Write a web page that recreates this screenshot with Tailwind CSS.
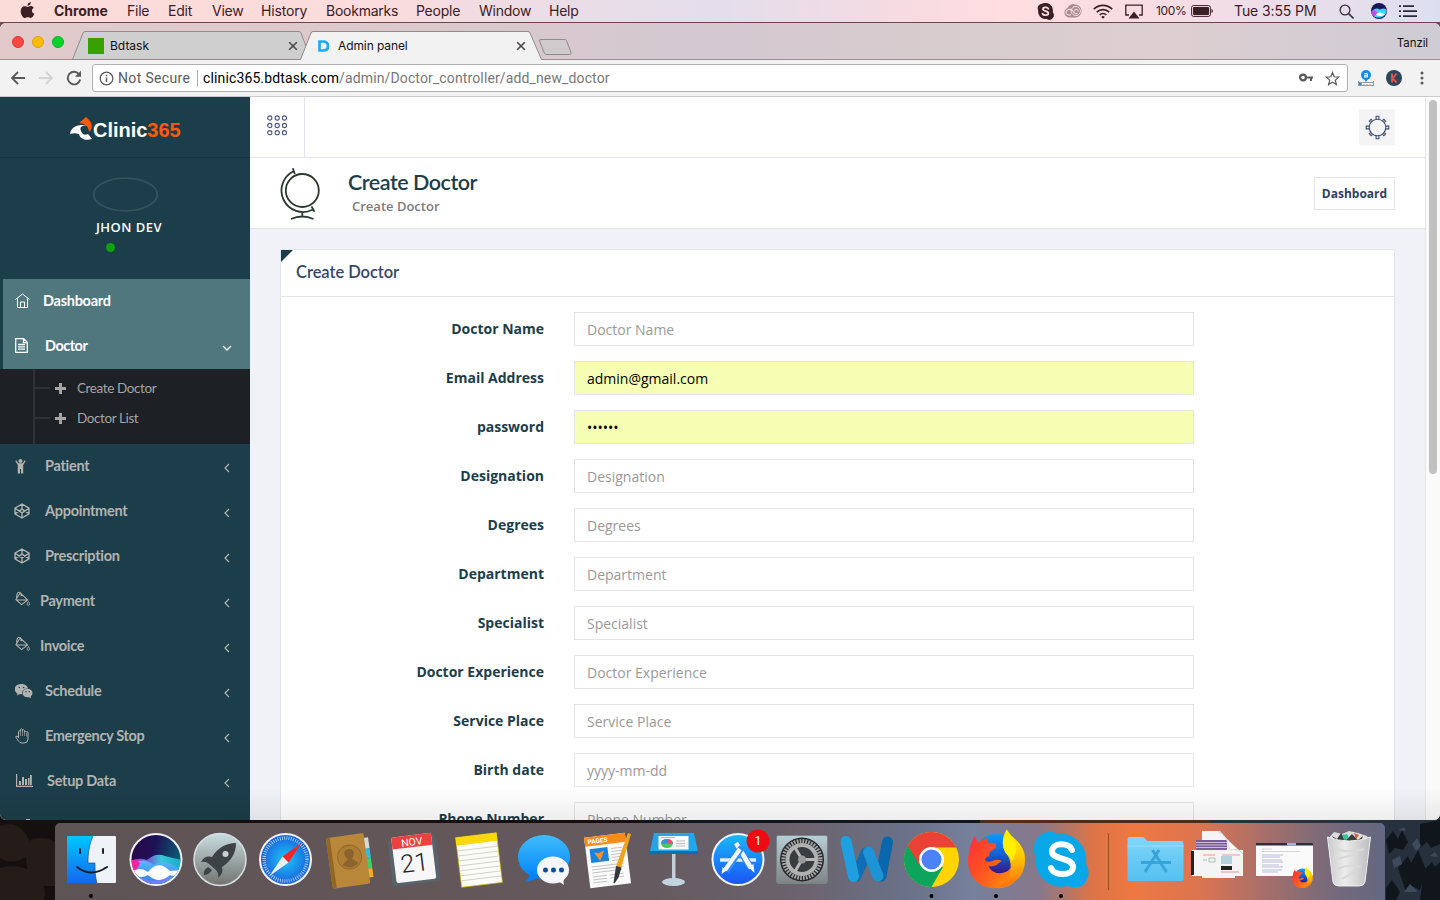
<!DOCTYPE html>
<html lang="en">
<head>
<meta charset="utf-8">
<title>Admin panel</title>
<script src="https://cdn.jsdelivr.net/npm/@tailwindcss/browser@4"></script>
</head>
<body class="w-[1440px] h-[900px] overflow-hidden relative bg-[#15110f] font-['Open_Sans',sans-serif]">

<!-- shared symbols -->
<svg class="absolute w-0 h-0" aria-hidden="true">
  <defs>
    <symbol id="left" viewBox="0 0 8 10"><path d="M6 1 2 5l4 4" fill="none" stroke="currentColor" stroke-width="1.2"/></symbol>
    <symbol id="x" viewBox="0 0 10 10"><path d="M1.2 1.2l7.6 7.6M8.8 1.2 1.2 8.8" stroke="#4c4648" stroke-width="1.6" fill="none"/></symbol>
    <symbol id="codepen" viewBox="0 0 16 16"><path d="M8 1 15 5.2v5.6L8 15 1 10.800V5.200zM1 5.200l7 4.700 7-4.700M1 10.800 8 6.100l7 4.700M8 1v5.100M8 9.900V15" fill="none" stroke="currentColor" stroke-width="1.35" stroke-linejoin="round"/></symbol>
    <symbol id="bucket" viewBox="0 0 16 16"><path d="M5.500 1.600 13.500 9 7 14 1 8.700zM1 9h12.500M1.800 7.500C1.500 3.500 2.500.8 4.500.8s2.200 2 2 4.200" fill="none" stroke="currentColor" stroke-width="1.100"/><path d="M14.300 10.800c-2.200 3.200-1 4 0 4s2.200-.8 0-4z" fill="none" stroke="currentColor" stroke-width="1"/></symbol>
    <symbol id="plus" viewBox="0 0 11 11"><path d="M4 0h3v4h4v3H7v4H4V7H0V4h4z" fill="currentColor"/></symbol>
    <symbol id="ff" viewBox="0 0 56 58">
      <circle cx="28" cy="24" r="20" fill="url(#ffblue)"/>
      <path d="M7 6q0 4 3 7 4-4 10-5-2 3 0 5l7 1q2 4-2 6-5 2-4 6-5 1-4 5 5 2 9-1 4-1 7 1-3 2-5 4-5 2-8 1 3 7 11 7 11 0 13-10l1-8 10-4q3 14-4 24-8 13-23 13Q12 58 4 46-2 36 1 22 3 12 7 6z" fill="url(#ffred)"/>
      <path d="M38 0q3 5 9 10 9 8 9 20 0 14-10 21-8 6-18 6 14-5 14-20 0-9-5-14-6-10 1-23z" fill="url(#fftail)"/>
      <path d="M38 0q2 5 6 9 5 6 3 14l-4 9q-1-5-6-9-6-10 1-23z" fill="#fff000"/>
    </symbol>
    <linearGradient id="ffred" x1="0" y1="0" x2="1" y2=".6"><stop offset="0" stop-color="#ff2f50"/><stop offset=".2" stop-color="#ff3d2e"/><stop offset=".55" stop-color="#ff5a1f"/><stop offset="1" stop-color="#ff9a00"/></linearGradient>
    <linearGradient id="fftail" x1="0" y1="0" x2="0" y2="1"><stop offset="0" stop-color="#fff200"/><stop offset=".5" stop-color="#ffc400"/><stop offset="1" stop-color="#ff6a10"/></linearGradient>
    <linearGradient id="ffblue" x1="0" y1="0" x2="0" y2="1"><stop offset="0" stop-color="#0a9cff"/><stop offset=".5" stop-color="#1460d8"/><stop offset="1" stop-color="#3a1080"/></linearGradient>
    <linearGradient id="finL" x1="0" y1="0" x2="0" y2="1"><stop offset="0" stop-color="#00c8ff"/><stop offset="1" stop-color="#1666f0"/></linearGradient>
    <linearGradient id="siri" x1="0" y1="0" x2="1" y2=".3"><stop offset="0" stop-color="#2a0648"/><stop offset=".5" stop-color="#1d1256"/><stop offset="1" stop-color="#0a5a72"/></linearGradient>
    <linearGradient id="siriW" x1="0" y1="0" x2="1" y2="0"><stop offset="0" stop-color="#f01fb0"/><stop offset=".35" stop-color="#7a58d8"/><stop offset=".6" stop-color="#38c8d8"/><stop offset="1" stop-color="#16a9c8"/></linearGradient>
    <linearGradient id="siriB" x1="0" y1="0" x2="0" y2="1"><stop offset="0" stop-color="#58b8ff"/><stop offset="1" stop-color="#2878e8"/></linearGradient>
    <clipPath id="siriC"><circle cx="32" cy="36.500" r="24.500"/></clipPath>
    <linearGradient id="rocket" x1="0" y1="0" x2="0" y2="1"><stop offset="0" stop-color="#c9dde2"/><stop offset="1" stop-color="#71726f"/></linearGradient>
    <radialGradient id="safari"><stop offset="0" stop-color="#1cc8fa"/><stop offset="1" stop-color="#1a62dc"/></radialGradient>
    <linearGradient id="blueV" x1="0" y1="0" x2="0" y2="1"><stop offset="0" stop-color="#19b8fd"/><stop offset="1" stop-color="#1a55f5"/></linearGradient>
    <linearGradient id="msg" x1="0" y1="0" x2="0" y2="1"><stop offset="0" stop-color="#41bdfb"/><stop offset="1" stop-color="#0082fa"/></linearGradient>
    <linearGradient id="metal" x1="0" y1="0" x2="0" y2="1"><stop offset="0" stop-color="#b9ced6"/><stop offset="1" stop-color="#7f8486"/></linearGradient>
    <linearGradient id="folder" x1="0" y1="0" x2="0" y2="1"><stop offset="0" stop-color="#7fd6fa"/><stop offset="1" stop-color="#55bff0"/></linearGradient>
    <linearGradient id="trash" x1="0" y1="0" x2="1" y2="0"><stop offset="0" stop-color="#c9c9c9"/><stop offset=".4" stop-color="#ececec"/><stop offset="1" stop-color="#bdbdbd"/></linearGradient>
  </defs>
</svg>

<!-- desktop wallpaper strip -->
<svg class="absolute left-0 top-[800px]" width="1440" height="100">
  <rect width="1440" height="100" fill="#15100f"/>
  <path d="M0 26q14-6 24 6t4 24Q12 66 0 58zM30 40q18-6 30 6v40H36q-16-20-6-46zM0 68q20-6 34 6t10 26H0z" fill="#251b18"/>
  <rect x="640" y="18" width="340" height="8" fill="#10161c"/><rect x="980" y="18" width="230" height="8" fill="#4f2b18"/>
  <rect x="1210" y="18" width="230" height="82" fill="#27303d"/>
  <path d="M1386 40l7-9 5 8 4-9 6 12-5 8-8-2-6 6zM1398 68l10-12 3 7 7-13 8 20-6 20-8-4-6 6zM1420 24l20-4v24l-9 4-4-6-7 6zM1424 70l8-8 3 5 5-5v38h-20zM1386 88l6-8 8 12-4 8h-10z" fill="#11151c"/>
  <path d="M1392 60l8-4 2 8-8 4zM1412 44l5-6 4 8-5 5zM1404 92l6-8 8 8zM1430 56l5-4 3 5zM1398 30l6-3 2 4z" fill="#3c4a5c"/>
</svg>

<!-- macOS menu bar -->
<header class="h-[22px] flex items-center justify-between text-[14px] leading-[22px] tracking-[-0.25px] text-[#3b2026] font-['Inter',sans-serif] bg-[linear-gradient(90deg,#fbdcd9_0%,#fcdcdc_25%,#ecdde6_38%,#e3deec_50%,#f5dbe2_62%,#ffdde0_70%,#f3dde6_84%,#dddff0_100%)]">
  <div class="flex items-center pl-[20px] whitespace-nowrap">
    <svg class="w-[34px] h-[17px] pr-[19px] mb-px" viewBox="0 0 14 17" fill="#3b2026"><path d="M10.300 0c.2 2-1.500 3.800-3.300 3.800C6.800 2 8.400.2 10.300 0zM7.200 4.900c.8 0 1.600-.8 3-.8 1.300 0 2.400.7 3 1.600-2.600 1.600-2.200 5 .6 6.100-.7 1.900-2 4.200-3.500 4.200-1.200 0-1.500-.7-2.900-.7s-1.900.7-3 .7C2.500 16 .2 12.500.2 9.200c0-3.200 2-5 4-5 1.300 0 2.300.7 3 .7z"/></svg>
    <span class="w-[73px] font-bold tracking-[-0.05px]">Chrome</span><span class="w-[41px]">File</span><span class="w-[44px]">Edit</span><span class="w-[49px]">View</span><span class="w-[65px] tracking-[-0.15px]">History</span><span class="w-[90px] tracking-[-0.25px]">Bookmarks</span><span class="w-[63px]">People</span><span class="w-[70px]">Window</span><span>Help</span>
  </div>
  <div class="flex items-center pr-[23px] whitespace-nowrap">
    <svg class="mr-[9px]" width="17" height="17" viewBox="0 0 17 17"><path d="M5 .8a7.500 7.500 0 0 1 10.700 8.500A4.500 4.500 0 0 1 9.800 16 7.500 7.500 0 0 1 1.200 7.500 4.500 4.500 0 0 1 5 .8z" fill="#3b2026"/><path d="M11.300 5.700C10.500 3.900 5.800 3.900 5.900 6.300c.1 2.300 5.500 1.500 5.500 4 0 2.400-5.100 2.500-5.900.3" fill="none" stroke="#fbdde0" stroke-width="1.800" stroke-linecap="round"/></svg>
    <svg class="mr-[10px]" width="20" height="14" viewBox="0 0 20 14"><path d="M5.500 13.500a5 5 0 0 1-1-9.500A6.500 6.500 0 0 1 12.500.4a6.600 6.600 0 0 1 .5 13.100z" fill="#a58d90"/><circle cx="12.800" cy="7" r="4.600" fill="none" stroke="#fbdde0" stroke-width="1"/><path d="M14.500 9.200c-2.500 1.800-4-1.500-5.500-3C6.500 4.500 3 5.800 3 8.300s3 3.500 5 2.200M11 6.500c1.500-2 4.500-.8 4.300 1" fill="none" stroke="#fbdde0" stroke-width="1.100"/></svg>
    <svg class="mr-[12px]" width="20" height="15" viewBox="0 0 20 15" fill="none" stroke="#3b2026" stroke-width="1.700"><path d="M.8 5.200a13 13 0 0 1 18.400 0M3.800 8.200a8.800 8.800 0 0 1 12.400 0M6.700 11a4.800 4.800 0 0 1 6.600 0"/><path d="m10 14.800-1.800-1.900a2.600 2.600 0 0 1 3.600 0z" fill="#3b2026" stroke="none"/></svg>
    <svg class="mr-[13px]" width="18" height="15" viewBox="0 0 18 15"><path d="M4 11H.8V1.200h16.400V11H14" fill="none" stroke="#3b2026" stroke-width="1.300"/><path d="m9 7.500 5.500 7h-11z" fill="#3b2026"/></svg>
    <span class="w-[35px] text-[12px] tracking-[-0.3px]">100%</span>
    <svg class="mr-[21px]" width="22" height="12" viewBox="0 0 22 12"><rect x=".6" y=".6" width="18.800" height="10.800" rx="2" fill="none" stroke="#3b2026" stroke-width="1"/><rect x="2" y="2" width="16" height="8" rx="1" fill="#3b2026"/><path d="M20.500 4c1.800.6 1.800 3.400 0 4z" fill="#3b2026"/></svg>
    <span class="w-[105px] tracking-[-0.1px]">Tue 3:55 PM</span>
    <svg class="mr-[17px]" width="15" height="15" viewBox="0 0 15 15" fill="none" stroke="#3a2b38"><circle cx="6" cy="6" r="4.900" stroke-width="1.300"/><path d="m9.500 9.500 5 5" stroke-width="1.600"/></svg>
    <svg class="mr-[12px]" width="16" height="16" viewBox="0 0 16 16"><circle cx="8" cy="8" r="8" fill="#1c1458"/><path d="M1 8q4-4 8-1.500 4-2 6.800.5a8 8 0 0 1-15 3.500z" fill="#3fd2f5"/><path d="M.2 8.500q3-3 6 1l-3 4.500Q.5 12 .2 8.500z" fill="#c04be8"/><path d="M5 11.500q4-4 9 0-5 3-9 0z" fill="#fff"/></svg>
    <svg width="18" height="13" viewBox="0 0 18 13" stroke="#2d2a38" stroke-width="1.800"><path d="M0 1.200h2M4 1.200h11M0 6.200h2M4 6.200h14M0 11.200h2M4 11.200h14"/></svg>
  </div>
</header>

<!-- Chrome window -->
<main class="h-[798px] border-t border-[#6e4650] bg-[#6b4a5a]">
<div class="h-full overflow-hidden rounded-[6px] flex flex-col bg-[#f2f2f2]">
  <div class="h-[37px] shrink-0 flex items-start bg-[linear-gradient(90deg,#e2cacb_0%,#dbc9cc_30%,#d3c8d0_48%,#d9cccf_65%,#dcced1_82%,#ceccd4_100%)] shadow-[inset_0_-1px_0_#9b8f92] font-['Inter',sans-serif] text-[12px] text-[#111]">
    <div class="flex gap-[8px] pl-[12px] pt-[13px] w-[72px]">
      <i class="size-[12px] shrink-0 rounded-full bg-[#fc4744] border border-[#e0352f]"></i><i class="size-[12px] shrink-0 rounded-full bg-[#fdbc05] border border-[#e0a203]"></i><i class="size-[12px] shrink-0 rounded-full bg-[#07d32b] border border-[#0ab022]"></i>
    </div>
    <div class="relative mt-[8px] w-[240px] h-[29px] flex items-center pl-[16px]">
      <svg class="absolute inset-0" width="240" height="29"><path d="M.5 28.500 11 2Q11.600.5 13 .5h214q1.500 0 2 1.500l10 26.500z" fill="#cfcfcf"/><path d="M.5 28.500 11 2Q11.600.5 13 .5h214q1.500 0 2 1.500l10 26.500H0" fill="none" stroke="#938a8c"/></svg>
      <i class="relative size-[16px] bg-[#38a000]"></i>
      <span class="relative pl-[6px] w-[184px] tracking-[0px]">Bdtask</span>
      <svg class="relative" width="10" height="10"><use href="#x"/></svg>
    </div>
    <div class="relative -ml-[12px] mt-[8px] w-[244px] h-[29px] flex items-center pl-[18px]">
      <svg class="absolute inset-0" width="244" height="29"><path d="M.5 29 11 2Q11.600.5 13 .5h215q1.500 0 2 1.500l12 27z" fill="#f2f2f2"/><path d="M.5 28.500 11 2Q11.600.5 13 .5h215q1.500 0 2 1.500l11.500 26.500H244" fill="none" stroke="#938a8c"/></svg>
      <svg class="relative" width="12" height="12" viewBox="0 0 12 12"><path d="M1.500 1.500H5q5 0 5 4.500t-5 4.500H1.500z" fill="none" stroke="#1fa9fb" stroke-width="2.700"/></svg>
      <span class="relative pl-[8px] w-[186px] tracking-[-0.1px]">Admin panel</span>
      <svg class="relative" width="10" height="10"><use href="#x"/></svg>
    </div>
    <svg class="-ml-[6px] mt-[15px]" width="35" height="18"><path d="M3 1.500h23q2 0 2.500 1l4.500 12q.5 2-1.500 2H9q-2 0-2.500-1L1.500 3Q1 1.500 3 1.500z" fill="#cfcbcc" stroke="#938a8c"/></svg>
    <span class="ml-auto pr-[12px] pt-[12px] text-[11.500px] leading-[17px] tracking-[-0.1px]">Tanzil</span>
  </div>

  <div class="h-[37px] shrink-0 flex items-center bg-[#f2f2f2] border-b border-[#c9c9c9] pl-[10px] pr-[10px]">
    <svg width="16" height="14" viewBox="0 0 16 14"><path d="M15 7H2M8 1 2 7l6 6" fill="none" stroke="#5a5a5a" stroke-width="1.800"/></svg>
    <svg class="ml-[12px]" width="16" height="14" viewBox="0 0 16 14"><path d="M1 7h13M8 1l6 6-6 6" fill="none" stroke="#d4d4d4" stroke-width="1.800"/></svg>
    <svg class="ml-[12px]" width="16" height="16" viewBox="0 0 16 16"><path d="M13.300 4.500A6.300 6.300 0 1 0 14.200 9.500" fill="none" stroke="#5a5a5a" stroke-width="1.900"/><path d="M15 .8v6H9z" fill="#5a5a5a"/></svg>
    <div class="ml-[10px] w-[1256px] h-[28px] flex items-center rounded-[3px] border border-[#b0b0b0] bg-white font-['Roboto',sans-serif] text-[14px] tracking-[0.13px] whitespace-nowrap">
      <svg class="ml-[6px]" width="15" height="15" viewBox="0 0 15 15"><circle cx="7.500" cy="7.500" r="6.300" fill="none" stroke="#5a5a5a" stroke-width="1.300"/><path d="M7.500 6.500V11M7.500 3.700v1.600" stroke="#5a5a5a" stroke-width="1.500"/></svg>
      <span class="ml-[4px] w-[78px] text-[#5a5a5a] tracking-[0.34px]">Not Secure</span><i class="w-px h-[16px] bg-[#aaa] ml-px mr-[5px]"></i>
      <span class="text-[#777]"><span class="text-black">clinic365.bdtask.com</span>/admin/Doctor_controller/add_new_doctor</span>
      <svg class="ml-auto" width="14" height="10" viewBox="0 0 14 10"><circle cx="4" cy="4.500" r="2.900" fill="none" stroke="#5a5a5a" stroke-width="2.200"/><path d="M7 3.500h7v2h-1V8h-2V5.500H7z" fill="#5a5a5a"/></svg>
      <svg class="ml-[12px] mr-[7px]" width="15" height="15" viewBox="0 0 15 15"><path d="m7.500 1.500 1.700 4.300 4.600.3-3.500 3 1.100 4.500-3.900-2.500-3.900 2.500 1.100-4.500-3.500-3 4.600-.3z" fill="none" stroke="#5a5a5a" stroke-width="1.200"/></svg>
    </div>
    <svg class="ml-[10px]" width="16" height="18" viewBox="0 0 16 18"><circle cx="8" cy="6" r="5" fill="#108df0"/><path d="m6 10 2 3 2-3z" fill="#108df0"/><path d="M6.500 4.500h2.700V8H6.700V6.300h2.500" fill="none" stroke="#fff" stroke-width="1.100"/><path d="M.5 12v5M15.500 12v5M.5 13.500h15M.5 16.500h15" stroke="#999" fill="none"/><path d="M3 16v-1M6 16v-1M9 16v-1M12 16v-1" stroke="#999"/><rect x="1" y="14" width="2.500" height="2" fill="#108df0"/></svg>
    <svg class="ml-[12px]" width="16" height="16" viewBox="0 0 16 16"><circle cx="8" cy="8" r="8" fill="#2c4558"/><path d="M6 3.500v9M10.700 3.500 6.500 8.500l4.200 4" stroke="#e65350" stroke-width="1.900" fill="none"/></svg>
    <svg class="ml-[18px]" width="4" height="14" fill="#5a5a5a"><circle cx="2" cy="2" r="1.500"/><circle cx="2" cy="7" r="1.500"/><circle cx="2" cy="12" r="1.500"/></svg>
  </div>

  <!-- page -->
  <div class="relative flex-1 min-h-0 flex bg-[#f1f2f7]">
    <aside class="w-[250px] shrink-0 bg-[#1c3e4a] text-[#b3b3b1] overflow-hidden">
      <div class="h-[61px] border-b border-[#17343f] flex items-center pl-[69px] pt-[4px]">
        <svg width="24" height="24" viewBox="0 0 24 24"><path d="M1 17C2 10 9 6 19 9c-5-1-9 0-7 5 1 3 4 5 7 3l4 5c-6 2-12 0-13-5-3-1-6-1-9 0z" fill="#fff"/><path d="M10 6l7-6c6 5 8 10 3 15 0-5-4-9-10-9z" fill="#ff5a0a"/></svg>
        <span class="font-['Liberation_Sans',sans-serif] font-bold text-[20px] leading-[24px] pt-px tracking-[-0.02px] text-white">Clinic<span class="text-[#ff5a0a]">365</span></span>
      </div>
      <div class="h-[121px] flex flex-col">
        <svg class="ml-[92px] mt-[19px]" width="67" height="35"><ellipse cx="33.500" cy="17.500" rx="31.800" ry="16.300" fill="none" stroke="#33525c" stroke-width="1.800"/></svg>
        <span class="ml-[96px] mt-[6px] leading-[18px] text-[13px] font-semibold text-white tracking-[0.45px]">JHON DEV</span>
        <i class="ml-[106px] mt-[7px] size-[9px] rounded-full bg-[#0aa30a]"></i>
      </div>
      <nav class="font-['Lato',sans-serif] font-bold text-[14.500px] leading-[20px] tracking-[-0.28px]">
        <a class="ml-[3px] h-[45px] flex items-center bg-[#50777e] text-white pl-[12px]"><svg class="w-[15px] h-[16px] mr-[13px] mb-[2px]" viewBox="0 0 15 16" fill="none" stroke="currentColor"><path d="M.5 6.500 7.500 1l7 5.500M2.500 5.500v9h10v-9M5.500 14.500V9h4v5.500"/></svg><span class="pb-[2px]">Dashboard</span></a>
        <a class="ml-[3px] h-[45px] flex items-center bg-[#50777e] text-white pl-[12px]"><svg class="w-[13px] h-[15px] mr-[17px] mb-[2px]" viewBox="0 0 13 15" fill="none" stroke="currentColor" stroke-width="1.300"><path d="M.7.7h8l3.600 3.600v10H.7zM8.500.7v4h3.800M3 6.500h7M3 8.800h7M3 11.200h7"/></svg><span class="pb-[2px] tracking-[-0.5px]">Doctor</span><svg class="ml-auto mr-[18px] mt-[2px]" width="10" height="8"><path d="M1 2l4 4 4-4" fill="none" stroke="currentColor" stroke-width="1.300"/></svg></a>
        <div class="h-[75px] bg-[#1d2025] pl-[33px] font-normal text-[13.500px] tracking-[-0.4px] text-[#a5a5a3]">
          <div class="h-full border-l-2 border-[#2d3335] pt-[4px]">
            <a class="h-[30px] flex items-center"><i class="w-[15px] h-[2px] bg-[#2d3335] mr-[5px]"></i><svg class="mr-[11px]" width="11" height="11"><use href="#plus"/></svg>Create Doctor</a>
            <a class="h-[30px] flex items-center"><i class="w-[15px] h-[2px] bg-[#2d3335] mr-[5px]"></i><svg class="mr-[11px]" width="11" height="11"><use href="#plus"/></svg>Doctor List</a>
          </div>
        </div>
        <a class="h-[45px] flex items-center pl-[15px]"><svg class="w-[11px] h-[15px] mr-[19px]" viewBox="0 0 11 15" fill="currentColor"><circle cx="5.500" cy="2" r="2"/><path d="M.3 2l1-.8L3.500 4.200h4L9.700 1.200l1 .8-2.500 4V14.500H6V10H5v4.500H2.800V6z"/></svg><span class="pb-[2px]">Patient</span><svg class="ml-auto mr-[19px] mt-[3px]" width="8" height="10"><use href="#left"/></svg></a>
        <a class="h-[45px] flex items-center pl-[14px]"><svg class="mr-[15px] mb-[2px]" width="16" height="16"><use href="#codepen"/></svg><span class="pb-[2px]">Appointment</span><svg class="ml-auto mr-[19px] mt-[3px]" width="8" height="10"><use href="#left"/></svg></a>
        <a class="h-[45px] flex items-center pl-[14px]"><svg class="mr-[15px] mb-[2px]" width="16" height="16"><use href="#codepen"/></svg><span class="pb-[2px]">Prescription</span><svg class="ml-auto mr-[19px] mt-[3px]" width="8" height="10"><use href="#left"/></svg></a>
        <a class="h-[45px] flex items-center pl-[15px]"><svg class="mr-[10px] mb-[6px]" width="15" height="16"><use href="#bucket"/></svg><span class="pb-[2px]">Payment</span><svg class="ml-auto mr-[19px] mt-[3px]" width="8" height="10"><use href="#left"/></svg></a>
        <a class="h-[45px] flex items-center pl-[15px]"><svg class="mr-[10px] mb-[6px]" width="15" height="16"><use href="#bucket"/></svg><span class="pb-[2px]">Invoice</span><svg class="ml-auto mr-[19px] mt-[3px]" width="8" height="10"><use href="#left"/></svg></a>
        <a class="h-[45px] flex items-center pl-[15px]"><svg class="w-[18px] h-[14px] mr-[12px] mb-[2px]" viewBox="0 0 18 14"><path d="M6.500 0C10 0 12.500 2 13 4.500 9 4.500 6.500 7 7 10.200l-3 0-2 1.500.4-2C-2.500 6-.5 0 6.500 0z" fill="currentColor"/><ellipse cx="12.500" cy="9" rx="5" ry="4.300" fill="currentColor"/><path d="m13 13 3 1-.5-2.500z" fill="currentColor"/><g fill="#1c3e4a"><circle cx="4.300" cy="3.500" r=".8"/><circle cx="8.600" cy="3.500" r=".8"/><circle cx="11" cy="7.800" r=".7"/><circle cx="14.200" cy="7.800" r=".7"/></g></svg><span class="pb-[2px]">Schedule</span><svg class="ml-auto mr-[19px] mt-[3px]" width="8" height="10"><use href="#left"/></svg></a>
        <a class="h-[45px] flex items-center pl-[15px]"><svg class="w-[14px] h-[16px] mr-[16px] mb-[2px]" viewBox="0 0 14 16" fill="none" stroke="currentColor"><path d="M3.500 10V3.500q1-1.500 2 0v-2q1-1.500 2 0v1q1-1.500 2 0v1.500q1-1.200 2 0h1.500V11q0 4-4 4H6.500Q5 15 3.500 13L.7 9q0-2 2.800 0"/><path d="M5.500 3.500V8M7.500 2v6M9.500 3.500V8M11.500 5v3.500" stroke-width=".6"/></svg><span class="pb-[2px] tracking-[-0.35px]">Emergency Stop</span><svg class="ml-auto mr-[19px] mt-[3px]" width="8" height="10"><use href="#left"/></svg></a>
        <a class="h-[45px] flex items-center pl-[16px]"><svg class="w-[17px] h-[13px] mr-[14px] mb-[2px]" viewBox="0 0 17 13" fill="currentColor"><path d="M0 0h1.200v11.800H17V13H0zM3 7h2v4H3zM6 3h2v8H6zM9 5h2v6H9zM12 4h1.500v7H12zM14 1h1.800v10H14z"/></svg><span class="pb-[2px]">Setup Data</span><svg class="ml-auto mr-[19px] mt-[3px]" width="8" height="10"><use href="#left"/></svg></a>
        <div class="h-[16px] pl-[26px] pt-[15px]"><div class="w-[4px] h-[2px] bg-current"></div></div>
      </nav>
    </aside>

    <section class="flex-1 min-w-0 flex flex-col overflow-hidden">
      <div class="h-[61px] shrink-0 bg-white border-b border-[#e1e4ee] flex items-center justify-between pr-[30px]">
        <div class="w-[55px] h-full border-r border-[#e1e4ee] pl-[17px] pt-[18px]">
          <svg width="20" height="21" fill="none" stroke="#4a5580" stroke-width="1.100"><circle cx="2.800" cy="3" r="2.100"/><circle cx="10.200" cy="3" r="2.100"/><circle cx="17.500" cy="3" r="2.100"/><circle cx="2.800" cy="10.500" r="2.100"/><circle cx="10.200" cy="10.500" r="2.100"/><circle cx="17.500" cy="10.500" r="2.100"/><circle cx="2.800" cy="17.700" r="2.100"/><circle cx="10.200" cy="17.700" r="2.100"/><circle cx="17.500" cy="17.700" r="2.100"/></svg>
        </div>
        <div class="size-[36px] bg-[#f4f4f4] flex items-center justify-center">
          <svg width="25" height="25" viewBox="-12.500 -12.500 25 25" fill="none" stroke="#3c4a74" stroke-width="1.100"><circle r="8.300"/><path d="M-1.400-8.400v-2.900h2.800v2.900M8.400-1.400h2.900v2.800H8.400M1.400 8.400v2.900h-2.800V8.400M-8.400 1.400h-2.900v-2.800h2.900"/><path d="M-1.300-8.400v-1.900h2.600v1.900M8.400-1.300h1.900v2.600H8.400M1.300 8.400v1.900h-2.600V8.400M-8.400 1.300h-1.900v-2.600h1.900" transform="rotate(45)"/></svg>
        </div>
      </div>
      <div class="h-[71px] shrink-0 bg-white border-b border-[#e1e4ee] flex items-center pl-[28px] pr-[30px]">
        <svg class="mt-px" width="42" height="52" viewBox="0 0 42 52" fill="none" stroke="#273a2c" stroke-width="1.800"><circle cx="24.300" cy="22.500" r="16.500"/><path d="M15.500 3.200A21.500 21.500 0 0 0 34.500 41.800M14.800.3l2 5.700M33.500 38.500l3 5.300M24.300 44v4.500M13 51q11.500-5 22.500 0"/></svg>
        <div class="ml-[28px] flex flex-col pb-[3px]">
          <h1 class="font-['Lato',sans-serif] text-[21.500px] leading-[26px] text-[#1c3e4a] font-semibold whitespace-nowrap tracking-[-0.48px]">Create Doctor</h1>
          <small class="ml-[4px] text-[13px] leading-[18px] mt-[2px] text-[#7b7b7b] font-semibold">Create Doctor</small>
        </div>
        <a class="ml-auto h-[33px] w-[81px] border border-[#e1e4ee] text-center text-[12px] leading-[31px] font-bold text-[#2f3f5e]">Dashboard</a>
      </div>
      <div class="flex-1 min-h-0 overflow-hidden pt-[20px] pl-[30px] pr-[30px]">
        <div class="h-[620px] bg-white border border-[#e1e4ee] rounded-[2px]">
          <div class="relative h-[47px] border-b border-[#e4e5e8] pl-[15px] font-['Lato',sans-serif] font-semibold text-[16.500px] leading-[45px] text-[#374767] tracking-[-0.05px]">
            <i class="absolute left-0 top-0 size-[12px] bg-[#1c3e4a] [clip-path:polygon(0_0,100%_0,0_100%)]"></i>Create Doctor
          </div>
          <form class="pt-[15px] flex flex-col gap-[15px] text-[14px] leading-[20px]">
            <div class="flex"><label class="w-[263px] mr-[30px] pt-[7px] text-right font-bold text-[#1c3e4a]">Doctor Name</label><div class="w-[620px] h-[34px] border border-[#e4e5e7] bg-white pl-[12px] pt-[7px] text-[#999]">Doctor Name</div></div>
            <div class="flex"><label class="w-[263px] mr-[30px] pt-[7px] text-right font-bold text-[#1c3e4a]">Email Address</label><div class="w-[620px] h-[34px] border border-[#e4e5e7] bg-[#f6feb4] pl-[12px] pt-[7px] text-black">admin@gmail.com</div></div>
            <div class="flex"><label class="w-[263px] mr-[30px] pt-[7px] text-right font-bold text-[#1c3e4a]">password</label><div class="w-[620px] h-[34px] border border-[#e4e5e7] bg-[#f6feb4] pl-[12px] pt-[7px] text-black">••••••</div></div>
            <div class="flex"><label class="w-[263px] mr-[30px] pt-[7px] text-right font-bold text-[#1c3e4a]">Designation</label><div class="w-[620px] h-[34px] border border-[#e4e5e7] bg-white pl-[12px] pt-[7px] text-[#999]">Designation</div></div>
            <div class="flex"><label class="w-[263px] mr-[30px] pt-[7px] text-right font-bold text-[#1c3e4a]">Degrees</label><div class="w-[620px] h-[34px] border border-[#e4e5e7] bg-white pl-[12px] pt-[7px] text-[#999]">Degrees</div></div>
            <div class="flex"><label class="w-[263px] mr-[30px] pt-[7px] text-right font-bold text-[#1c3e4a]">Department</label><div class="w-[620px] h-[34px] border border-[#e4e5e7] bg-white pl-[12px] pt-[7px] text-[#999]">Department</div></div>
            <div class="flex"><label class="w-[263px] mr-[30px] pt-[7px] text-right font-bold text-[#1c3e4a]">Specialist</label><div class="w-[620px] h-[34px] border border-[#e4e5e7] bg-white pl-[12px] pt-[7px] text-[#999]">Specialist</div></div>
            <div class="flex"><label class="w-[263px] mr-[30px] pt-[7px] text-right font-bold text-[#1c3e4a]">Doctor Experience</label><div class="w-[620px] h-[34px] border border-[#e4e5e7] bg-white pl-[12px] pt-[7px] text-[#999]">Doctor Experience</div></div>
            <div class="flex"><label class="w-[263px] mr-[30px] pt-[7px] text-right font-bold text-[#1c3e4a]">Service Place</label><div class="w-[620px] h-[34px] border border-[#e4e5e7] bg-white pl-[12px] pt-[7px] text-[#999]">Service Place</div></div>
            <div class="flex"><label class="w-[263px] mr-[30px] pt-[7px] text-right font-bold text-[#1c3e4a]">Birth date</label><div class="w-[620px] h-[34px] border border-[#e4e5e7] bg-white pl-[12px] pt-[7px] text-[#999]">yyyy-mm-dd</div></div>
            <div class="flex"><label class="w-[263px] mr-[30px] pt-[7px] text-right font-bold text-[#1c3e4a]">Phone Number</label><div class="w-[620px] h-[34px] border border-[#e4e5e7] bg-white pl-[12px] pt-[7px] text-[#999]">Phone Number</div></div>
          </form>
        </div>
      </div>
    </section>
    <div class="w-[15px] shrink-0 bg-[#fafafa] border-l border-[#e6e6e6] pl-[3px] pt-[3px]"><div class="w-[8px] h-[374px] rounded-full bg-[#c1c1c1]"></div></div>
    <div class="absolute inset-x-0 bottom-0 h-[32px] bg-linear-to-b from-black/0 to-black/7"></div>
  </div>
</div>
</main>

<!-- Dock -->
<footer class="absolute left-[55px] top-[823px] w-[1330px] h-[77px] rounded-t-[5px] pl-[4px] flex bg-[linear-gradient(90deg,#5e5355_0%,#625658_25%,#655a5f_45%,#6b636d_56%,#6a7188_64%,#77809c_69%,#87788a_74%,#dc7447_78%,#ee7842_81%,#dd7450_86%,#a66f6b_91%,#766a7b_96%,#636780_100%)]">
  <svg class="shrink-0" width="64.660" height="77" viewBox="0 0 64.660 77"><rect x="8" y="13" width="49" height="47" rx="1" fill="#eef3f8"/><path d="M8 13h26c-4 9-5 18-5 27h7c0 7 0 13 2 20H8z" fill="url(#finL)"/><path d="M34 13c-4 9-5 18-5 27h7c0 7 0 13 2 20" fill="none" stroke="#1d3c66" stroke-width=".6"/><path d="M18 44q14 11 30 0M21 26v4M44 26v4" fill="none" stroke="#16202c" stroke-width="2" stroke-linecap="round"/><circle cx="32" cy="73" r="2" fill="#000"/></svg>
  <svg class="shrink-0" width="64.660" height="77" viewBox="0 0 64.660 77"><circle cx="32" cy="36.500" r="26.500" fill="#f2f2f6"/><g clip-path="url(#siriC)"><rect x="7" y="11" width="50" height="51" fill="url(#siri)"/><path d="M6 38q10-4 17-1 9-8 18-4 9 2 17 4v26H6z" fill="url(#siriW)"/><path d="M6 44q12-12 24-2 10-8 28 6v16H6z" fill="url(#siriB)"/><path d="M6 38q6-2 10 2l-4 8-6 2z" fill="#ff1fa0"/><path d="M7 49q9-6 17 0 10-13 22-1 6-1 12 0-6 7-12 4-11 10-22 0-9 5-17-3z" fill="#fff"/><path d="M16 54q12 8 32-1-4 10-16 10-12 0-16-9z" fill="#9a7ff0" opacity=".6"/></g></svg>
  <svg class="shrink-0" width="64.660" height="77" viewBox="0 0 64.660 77"><circle cx="32" cy="36.500" r="26" fill="url(#rocket)" stroke="#d6dfe2" stroke-width="1.500"/><path d="M48 20q-15 0-24 14-7-2-11 5 5-1 8 2l7 6q3 3 2 8 6-5 4-11 14-9 14-24z" fill="#3d4246"/><path d="M20 44q-5 3-4 8 5 0 8-5z" fill="#3d4246"/><circle cx="37.500" cy="31" r="3" fill="#c9d1d3"/></svg>
  <svg class="shrink-0" width="64.660" height="77" viewBox="0 0 64.660 77"><circle cx="32.500" cy="36.500" r="26.500" fill="#f2f4f6"/><circle cx="32.500" cy="36.500" r="24.500" fill="url(#safari)"/><circle cx="32.500" cy="36.500" r="21.500" fill="none" stroke="#cfe8ff" stroke-width="3.500" stroke-dasharray=".7 1.560"/><path d="m48.500 20-13 19.500-6-6z" fill="#fb2423"/><path d="M16.500 53l13-19.500 6 6z" fill="#f0f0f0"/></svg>
  <svg class="shrink-0" width="64.660" height="77" viewBox="0 0 64.660 77"><g transform="rotate(-8 32 37)"><rect x="46" y="17" width="7" height="11" fill="#d8d8d8"/><rect x="46" y="28" width="7" height="10" fill="#35bdd8"/><rect x="46" y="38" width="7" height="10" fill="#3dd268"/><rect x="46" y="48" width="7" height="9" fill="#f4ab28"/><rect x="11" y="12" width="38" height="51" rx="2" fill="#b98739"/><rect x="11" y="12" width="4" height="51" fill="#946625"/><circle cx="32" cy="34" r="12" fill="#ad7d33" stroke="#946828"/><path d="M32 26c-7 0-5 8-2 10l-6 5q8 7 16 0l-6-5c3-2 5-10-2-10z" fill="#8a642c"/></g></svg>
  <svg class="shrink-0" width="64.660" height="77" viewBox="0 0 64.660 77" font-family="Roboto,sans-serif"><g transform="rotate(-7 32 37)"><path d="M8 17l4-4h41l3 4v44H8z" fill="#59636a"/><rect x="12" y="12" width="40" height="46" rx="2" fill="#f7f7f7"/><path d="M12 14q0-2 2-2h36q2 0 2 2v10H12z" fill="#ef4040"/><text x="32" y="22.500" font-size="10.500" fill="#fff" text-anchor="middle">NOV</text><text x="32" y="48.500" font-size="25" font-weight="300" fill="#222" text-anchor="middle">21</text></g></svg>
  <svg class="shrink-0" width="64.660" height="77" viewBox="0 0 64.660 77"><g transform="rotate(-7 32 37)"><rect x="11.500" y="12" width="41" height="50" fill="#fcfcf7" stroke="#d8b90d" stroke-width=".7"/><rect x="11.500" y="12" width="41" height="8" fill="#fbd80b"/><path d="M12 25.500h40M12 30.500h40M12 35.500h40M12 40.500h40M12 45.500h40M12 50.500h40M12 55.500h40" stroke="#cfcfca" stroke-width=".9"/></g></svg>
  <svg class="shrink-0" width="64.660" height="77" viewBox="0 0 64.660 77"><ellipse cx="32" cy="34" rx="26" ry="22" fill="url(#msg)"/><path d="M18 48q0 7-5 11 9-1 14-6z" fill="#0083fa"/><ellipse cx="41" cy="47" rx="16" ry="13.500" fill="#f3f7fc"/><path d="M43 58q6 1 9 4-1-4 0-6z" fill="#f3f7fc"/><g fill="#144da0"><circle cx="33.500" cy="47" r="2.500"/><circle cx="41.500" cy="47" r="2.500"/><circle cx="49.500" cy="47" r="2.500"/></g></svg>
  <svg class="shrink-0" width="64.660" height="77" viewBox="0 0 64.660 77" font-family="Roboto,sans-serif"><g transform="rotate(-7 32 37)"><rect x="11" y="12" width="41" height="51" fill="#fafafa"/><rect x="11" y="12" width="41" height="9" fill="#f98c19"/><text x="14" y="19" font-size="6.500" font-weight="700" fill="#fff">PAGES</text><rect x="15" y="24" width="18" height="14" fill="#1583df"/><path d="m19 28 5 1 5-2-2 5-3 5-2-4z" fill="#ff9124"/><path d="M36 26h12M36 29h12M36 32h12M36 35h12M36 38h10M15 42h32M15 45h32M15 48h30M15 52h14M15 55h14M15 58h14M32 52h14M32 55h14" stroke="#b8b8b8" stroke-width=".8"/></g><path d="m52 10 3 1-10 34-5-1.500z" fill="#f5a21b"/><path d="m40 43 5.500 1.500-3 10-4 6-1-.5z" fill="#33383c"/></svg>
  <svg class="shrink-0" width="64.660" height="77" viewBox="0 0 64.660 77"><rect x="31" y="31" width="3.500" height="29" fill="#c5ced6"/><ellipse cx="32.500" cy="59" rx="11.500" ry="4" fill="#c2d4e0"/><path d="M13 10h40l4 18H9z" fill="#25a4e9"/><path d="M9 28h48v3H9z" fill="#0c6db8"/><rect x="17.500" y="13" width="30" height="13.500" fill="#f7fafc"/><ellipse cx="26" cy="20.500" rx="6" ry="4.500" fill="#45c95b"/><path d="M26 20.500V16a6 4.500 0 0 1 6 4.500z" fill="#f24867"/><path d="M26 20.500h-6a6 4.500 0 0 1 6-4.500z" fill="#2f8fe8"/><path d="M35 18h9M35 20.500h9M35 23h9M20 14.500h14" stroke="#aaa" stroke-width=".8"/></svg>
  <svg class="shrink-0 overflow-visible" width="64.660" height="77" viewBox="0 0 64.660 77" font-family="Roboto,sans-serif"><circle cx="32" cy="36.500" r="26.500" fill="#f2f4f6"/><circle cx="32" cy="36.500" r="24.500" fill="url(#blueV)"/><path d="M14 37h36" stroke="#e4edf6" stroke-width="3.600"/><path d="M29.500 20.500 45 45" stroke="#2a8ff8" stroke-width="7"/><path d="m30 20 15 25" stroke="#f7f9fb" stroke-width="4.500"/><path d="m42.500 44 5-3 1 9z" fill="#f7f9fb"/><path d="M36 24 20 48" stroke="#2a8ff8" stroke-width="6.500"/><path d="M34 26 19 47" stroke="#f7f9fb" stroke-width="4.200"/><path d="m16.500 44 4 3.500-5 3.500z" fill="#f7f9fb"/><circle cx="52" cy="18" r="11.500" fill="#f20a12"/><text x="52" y="22.500" font-size="13" fill="#fff" text-anchor="middle">1</text></svg>
  <svg class="shrink-0" width="64.660" height="77" viewBox="0 0 64.660 77"><rect x="6.500" y="12.500" width="51" height="48" rx="2" fill="url(#metal)" stroke="#78858b"/><circle cx="32" cy="36.500" r="22" fill="#25282b"/><circle cx="32" cy="36.500" r="18.500" fill="none" stroke="#a5a7a8" stroke-width="4" stroke-dasharray="1.700 1.204"/><circle cx="32" cy="36.500" r="14.500" fill="#3a3d40" stroke="#b0b1b1" stroke-width="4"/><path d="M32 36.500h14M32 36.500l-7-12M32 36.500l-7 12" stroke="#b5b6b6" stroke-width="3"/><circle cx="32" cy="36.500" r="4" fill="#9a9c9c"/></svg>
  <svg class="shrink-0" width="64.660" height="77" viewBox="0 0 64.660 77" fill="none" stroke-linejoin="round" stroke-linecap="round"><path d="M52.500 19 46 53" stroke="#0b67ad" stroke-width="11"/><path d="M31 30 21 53" stroke="#0f6db5" stroke-width="11"/><path d="M11 18.500l7.500 35" stroke="#1f9fe0" stroke-width="11"/><path d="M33.500 29l9.500 24" stroke="#1c94d6" stroke-width="11"/></svg>
  <svg class="shrink-0" width="64.660" height="77" viewBox="0 0 64.660 77"><circle cx="31.500" cy="36.500" r="27.500" fill="#ffd400"/><path d="M8.100 22A27.500 27.500 0 0 0 31.500 64L43 44l-11.500-4-9 2z" fill="#0da45c"/><path d="M7.700 22.700 21 43l7-14z" fill="#0da45c"/><path d="M7.700 22.700A27.500 27.500 0 0 1 56.300 24.500H31.500q-9 0-11.500 9v9z" fill="#ea4335"/><circle cx="31.500" cy="36.500" r="12.500" fill="#fff"/><circle cx="31.500" cy="36.500" r="10" fill="#4a83f5"/><circle cx="31.500" cy="73" r="2" fill="#000"/></svg>
  <svg class="shrink-0" width="64.660" height="77" viewBox="0 0 64.660 77"><use href="#ff" x="4" y="6.500" width="57" height="59"/><circle cx="32" cy="73" r="2" fill="#000"/></svg>
  <svg class="shrink-0" width="64.660" height="77" viewBox="0 0 64.660 77"><path d="M19 9q5-1 9 2a26 26 0 0 1 29 30q4 6 2 13-5 14-20 9A26 26 0 0 1 7 33Q3 28 6 19 10 10 19 9z" fill="#08a7e8"/><path d="M43 27C40 19 23 19 23 28.500c0 9 21 5 21 15.500 0 9-19 9.500-22 1" fill="none" stroke="#fff" stroke-width="6" stroke-linecap="round"/><circle cx="32" cy="73" r="2" fill="#000"/></svg>
  <div class="w-[30px] shrink-0 pl-[14px] pt-[10px]"><div class="w-px h-[57px] bg-[#a34c22]"></div></div>
  <svg class="shrink-0" width="64.660" height="77" viewBox="0 0 64.660 77"><path d="M3.500 17q0-3 2-3h13q2 0 3 2l2 2h34q2 0 2 2v36q0 2-2 2h-52q-2 0-2-2z" fill="url(#folder)"/><path d="M3.500 23h56" stroke="#9be0fb"/><g stroke="#38a5da" stroke-width="3" fill="none"><path d="M17 39.500h30M28.500 27l14 22M35 27 21 49"/></g></svg>
  <svg class="shrink-0" width="64.660" height="77" viewBox="0 0 64.660 77"><path d="M14 8h18l15 17v30H14z" fill="#f4f4f4"/><path d="M8 17h31v10H8z" fill="#7a5c9c"/><path d="M8 19.500h31M8 22h31M8 24.500h31" stroke="#c9bdd8"/><rect x="4" y="27" width="51" height="26" fill="#f4f4f4"/><rect x="3" y="28" width="3" height="24" fill="#222"/><path d="M30 8q9 4 12 19 9-2 13 4L43 20z" fill="#fdfdfd" stroke="#ccc" stroke-width=".6"/><rect x="33" y="33" width="11" height="8" fill="#b4d2dd"/><rect x="33" y="43" width="11" height="4" fill="#222"/><path d="M15 32h12M33 49h18M34 32h18" stroke="#e89a9a"/><path d="M15 37h4M21 35h6v4h-6z" stroke="#a8c0b0" fill="none"/></svg>
  <svg class="shrink-0" width="64.660" height="77" viewBox="0 0 64.660 77"><rect x="3" y="20" width="57" height="33" fill="#fafafa"/><path d="M3 20h57v2.500H3z" fill="#2b303b"/><path d="M34 20h9v2.500h-9z" fill="#9db6e0"/><path d="M9 26h10M9 28.500h38" stroke="#ccc" stroke-width=".8"/><path d="M9 32h21M9 34h18M9 37h20M9 39h21M9 42h17M9 44h21M9 47h20M9 49h16" stroke="#a8add0" stroke-width=".8"/><use href="#ff" x="39" y="44" width="21" height="21"/></svg>
  <svg class="shrink-0" width="64.660" height="77" viewBox="0 0 64.660 77"><path d="M11 16l6-7 8 2 7-3 9 2 9 3 2 4-8 3H20z" fill="#dcdcdc"/><path d="m15 13 5 3 4-6 5 7 6-6 6 6 5-4-2 6H19z" fill="#3a3f42"/><path d="m25 12 5-1 2 4-5 2z" fill="#35c796"/><path d="m37 10 5 2-3 4z" fill="#d35b3b"/><path d="M10.500 14q22 8 43 0L48 59q-1 4-6 4H22q-5 0-6-4z" fill="url(#trash)" stroke="#eee"/><path d="M17 25q12 6 30 1M19 36l22-5M20 46q12-6 24-2M25 56l14-8" stroke="#d9d9d9" stroke-width="2" fill="none"/></svg>
</footer>
</body>
</html>
